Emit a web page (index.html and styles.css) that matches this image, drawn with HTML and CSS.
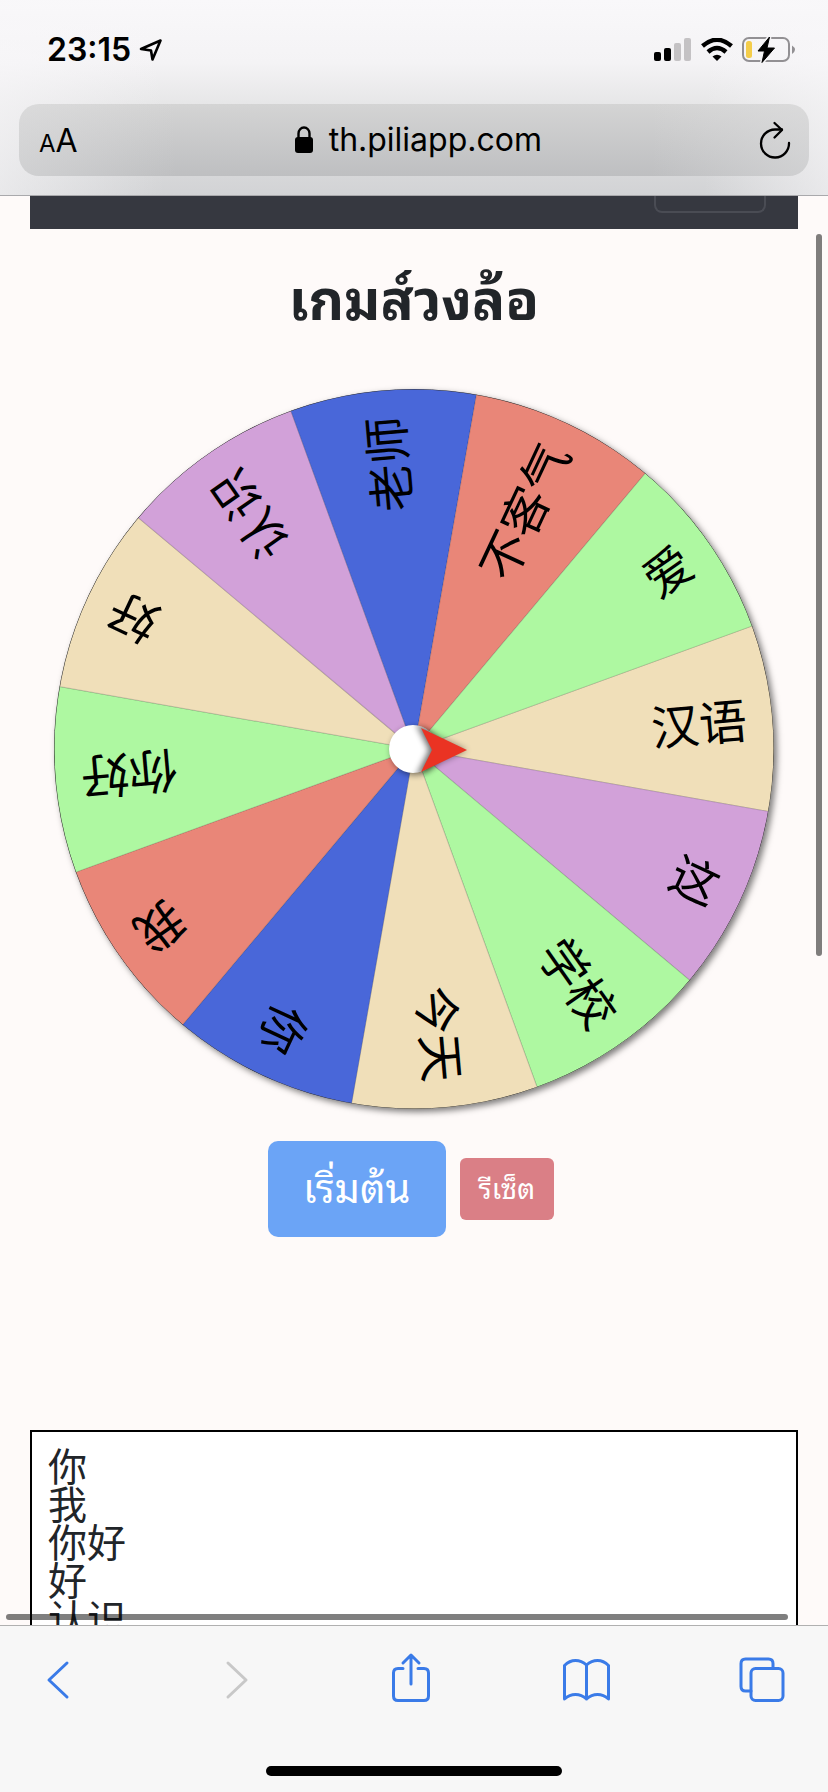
FILE: index.html
```html
<!DOCTYPE html>
<html lang="th">
<head>
<meta charset="utf-8">
<meta name="viewport" content="width=device-width, initial-scale=1">
<title>เกมส์วงล้อ</title>
<link rel="stylesheet" href="styles.css">
</head>
<body>
<header class="browser-top">
  <div class="status">
    <div class="status-left">
      <span class="time">23:15</span>
      <svg class="icon" width="24" height="24" viewBox="0 0 24 24" aria-hidden="true"><path d="M2 11 21.500 2.500 13.500 21.500 12 12.500z" fill="none" stroke="#000" stroke-width="2.600" stroke-linejoin="round"/></svg>
    </div>
    <div class="status-right">
      <svg class="icon" width="38" height="24" viewBox="0 0 38 24" aria-hidden="true"><rect x="0" y="14" width="7" height="9" rx="2"/><rect x="10" y="10" width="7" height="13" rx="2"/><g fill="#c4c2c4"><rect x="20" y="5" width="7" height="18" rx="2"/><rect x="30" y="0" width="7" height="23" rx="2"/></g></svg>
      <svg class="icon" width="32" height="24" viewBox="0 0 32 24" aria-hidden="true"><g fill="none" stroke="#000" stroke-width="4.400"><path d="M1.500 8Q16-4.500 30.500 8"/><path d="M7 14Q16 6 25 14"/></g><path d="M11.500 18.500Q16 15 20.500 18.500L16 23z"/></svg>
      <svg class="icon" width="54" height="28" viewBox="0 0 54 28" aria-hidden="true"><rect x="1" y="2" width="46" height="23" rx="6" fill="none" stroke="#929093" stroke-width="2"/><rect x="4" y="5" width="6" height="17" rx="2.500" fill="#f4cd4a"/><path d="M50 9.500q6 4 0 8.500z" fill="#929093"/><path d="M27.500 1 16 15h6.500L20 26.500 32.500 12H25z" stroke="#f5f4f6" stroke-width="4"/><path d="M27.500 1 16 15h6.500L20 26.500 32.500 12H25z" stroke="#000" stroke-linejoin="round"/></svg>
    </div>
  </div>
  <div class="address">
    <button class="bare text-size" aria-label="Text size"><span class="small-a">A</span><span class="big-a">A</span></button>
    <div class="site">
      <svg class="icon" width="18" height="28" viewBox="0 0 18 28" aria-hidden="true"><rect x="0" y="11" width="18" height="16" rx="3"/><path d="M3.500 13V7.500a5.500 6 0 0 1 11 0V13" fill="none" stroke="#000" stroke-width="2.400"/></svg>
      <span>th.piliapp.com</span>
    </div>
    <button class="bare" aria-label="Reload"><svg class="icon" width="32" height="38" viewBox="0 0 32 38" aria-hidden="true"><g fill="none" stroke="#000" stroke-width="2.300" stroke-linecap="round" stroke-linejoin="round"><path d="M30 22A14 14 0 1 1 16 8.500h7"/><path d="M15.500 2 23 9 15.500 16.500"/></g></svg></button>
  </div>
</header>

<main class="page">
  <nav class="navbar"><button class="menu-toggle" aria-label="Menu"></button></nav>
  <h1 class="title">เกมส์วงล้อ</h1>
  <svg class="wheel" viewBox="-360 -360 720 720" role="img" aria-label="เกมส์วงล้อ">
    <defs>
      <path id="slice" d="M0 0 347.700-93.200A360 360 0 0 1 347.700 93.200z"/>
      <clipPath id="hub"><circle cx="-1" cy="0" r="24"/></clipPath>
      <filter id="soft" x="-50%" y="-50%" width="200%" height="200%"><feGaussianBlur stdDeviation="3"/></filter>
    </defs>
    <g class="slices">
      <use href="#slice" class="wheat" transform="rotate(-5)"/>
      <use href="#slice" class="plum" transform="rotate(25)"/>
      <use href="#slice" class="green" transform="rotate(55)"/>
      <use href="#slice" class="wheat" transform="rotate(85)"/>
      <use href="#slice" class="blue" transform="rotate(115)"/>
      <use href="#slice" class="salmon" transform="rotate(145)"/>
      <use href="#slice" class="green" transform="rotate(175)"/>
      <use href="#slice" class="wheat" transform="rotate(205)"/>
      <use href="#slice" class="plum" transform="rotate(235)"/>
      <use href="#slice" class="blue" transform="rotate(265)"/>
      <use href="#slice" class="salmon" transform="rotate(295)"/>
      <use href="#slice" class="green" transform="rotate(325)"/>
    </g>
    <circle class="rim" r="360"/>
    <g class="labels">
      <text x="334" y="18" transform="rotate(-5)">汉语</text>
      <text x="334" y="18" transform="rotate(25)">这</text>
      <text x="334" y="18" transform="rotate(55)">学校</text>
      <text x="334" y="18" transform="rotate(85)">今天</text>
      <text x="334" y="18" transform="rotate(115)">你</text>
      <text x="334" y="18" transform="rotate(145)">我</text>
      <text x="334" y="18" transform="rotate(175)">你好</text>
      <text x="334" y="18" transform="rotate(205)">好</text>
      <text x="334" y="18" transform="rotate(235)">认识</text>
      <text x="334" y="18" transform="rotate(265)">老师</text>
      <text x="334" y="18" transform="rotate(295)">不客气</text>
      <text x="334" y="18" transform="rotate(325)">爱</text>
    </g>
    <circle cx="1" cy="2" r="24" opacity=".5" filter="url(#soft)"/>
    <path d="M8-21 53 1 8 23z" opacity=".4" filter="url(#soft)"/>
    <circle cx="-1" cy="0" r="24" fill="#fff"/>
    <path d="M7-21 53 1 7 23 18 1z" clip-path="url(#hub)" stroke="#000" stroke-width="5" opacity=".6" filter="url(#soft)"/>
    <path d="M7-21 53 1 7 23 18 1z" fill="#ea3323"/>
  </svg>
  <div class="actions">
    <button class="btn start">เริ่มต้น</button>
    <button class="btn reset">รีเซ็ต</button>
  </div>
  <textarea class="entries" aria-label="รายการ" spellcheck="false">你
我
你好
好
认识
老师
不客气
爱
汉语
这
学校
今天</textarea>
  <div class="scroll-y"></div>
  <div class="scroll-x"></div>
</main>

<footer class="browser-bottom">
  <nav class="tools">
    <button class="bare" aria-label="Back"><svg class="icon tool" viewBox="0 0 48 52"><path d="M33 11 15 28 33 45"/></svg></button>
    <button class="bare" aria-label="Forward" disabled><svg class="icon tool muted" viewBox="0 0 48 52"><path d="M18 11 36 28 18 45"/></svg></button>
    <button class="bare" aria-label="Share"><svg class="icon tool" viewBox="0 0 48 52"><path d="M17 16.500H12Q7.500 16.500 7.500 21V44Q7.500 48.500 12 48.500H38Q42.500 48.500 42.500 44V21Q42.500 16.500 38 16.500H32M25 32V3.500M17 11 25 3 33 11"/></svg></button>
    <button class="bare" aria-label="Bookmarks"><svg class="icon tool" viewBox="0 0 48 52"><path d="M24.500 13Q19.500 8.500 13.500 8.500T2.500 13.500V47Q7.500 42.500 13.500 42.500T24.500 47Q29.500 42.500 35.500 42.500T46.500 47V13.500Q41.500 8.500 35.500 8.500T24.500 13zV47"/></svg></button>
    <button class="bare" aria-label="Tabs"><svg class="icon tool" viewBox="0 0 48 52"><rect x="13" y="16.500" width="32" height="32" rx="4.500"/><path d="M13 39H7.500Q3 39 3 34.500V11.500Q3 7 7.500 7H30.500Q35 7 35 11.500V16.500"/></svg></button>
  </nav>
  <div class="home-bar"></div>
</footer>
</body>
</html>
```
FILE: styles.css
```css
* { box-sizing: border-box; }

body {
  margin: 0;
  height: 100vh;
  display: flex;
  flex-direction: column;
  overflow: hidden;
  background: #fefaf9;
  color: #212529;
  font-family: Inter, "Noto Sans Thai Looped", Loma, "Noto Sans Thai", "Noto Sans", "Noto Sans CJK SC", sans-serif;
}

.icon { display: block; flex: none; }

.bare {
  margin: 0;
  padding: 0;
  border: 0;
  background: none;
  color: inherit;
  font: inherit;
}

.browser-top {
  flex: none;
  padding: 0 19px 19px;
  border-bottom: 1px solid #a9a9ac;
  background:
    linear-gradient(90deg, rgba(248, 247, 249, .6), rgba(248, 247, 249, 0) 20%, rgba(248, 247, 249, 0) 85%, rgba(248, 247, 249, .6)),
    linear-gradient(#f9f8fa, #f4f3f5 32%, #e6e6e7 54%, #d2d3d5);
  color: #000;
}

.status {
  height: 104px;
  padding: 0 13px 4px 28px;
  display: flex;
  justify-content: space-between;
  align-items: center;
}

.status-left { display: flex; align-items: center; gap: 8px; }
.status-right { display: flex; align-items: center; gap: 9px; }
.time { font-size: 32px; font-weight: 600; line-height: 40px; }

.address {
  height: 72px;
  padding: 0 18px 0 20px;
  border-radius: 20px;
  display: flex;
  align-items: center;
  justify-content: space-between;
  background:
    linear-gradient(90deg, rgba(225, 225, 226, .5), rgba(225, 225, 226, 0) 20%, rgba(225, 225, 226, 0) 80%, rgba(225, 225, 226, .5)),
    linear-gradient(#d4d4d4, #bebfc1);
}

.text-size { display: flex; align-items: baseline; padding-top: 4px; line-height: 40px; }
.small-a { font-size: 24px; }
.big-a { font-size: 32px; }
.site { display: flex; align-items: center; gap: 16px; font-size: 32px; line-height: 40px; }

.page {
  flex: 1;
  min-height: 0;
  position: relative;
  overflow: hidden;
  padding: 0 30px;
  display: flex;
  flex-direction: column;
}

.navbar {
  flex: none;
  height: 33px;
  padding-right: 32px;
  display: flex;
  justify-content: flex-end;
  background: #363840;
}

.menu-toggle {
  width: 112px;
  height: 17px;
  border: 2px solid #4a4c54;
  border-top: 0;
  border-radius: 0 0 8px 8px;
  background: none;
}

.title {
  margin: 31px 0 49px;
  font-size: 55px;
  font-weight: 700;
  line-height: 80px;
  text-align: center;
}

.wheel {
  flex: none;
  display: block;
  margin: 0 24px 32px;
  border-radius: 50%;
  box-shadow: 3px 3px 6px rgba(0, 0, 0, .5);
}

.slices { stroke: #000; stroke-opacity: .15; stroke-width: 1; }
.rim { fill: none; stroke: #333; stroke-width: 1; }
.wheat { fill: #f0dfb9; }
.plum { fill: #d2a1d9; }
.green { fill: #aef8a1; }
.blue { fill: #4967d9; }
.salmon { fill: #e98678; }
.labels { font-family: "Noto Sans CJK SC", sans-serif; font-size: 48px; text-anchor: end; fill: #000; }

.actions {
  display: flex;
  justify-content: center;
  align-items: center;
  gap: 14px;
  margin: 0 6px 193px 0;
}

.btn { border: 0; color: #fff; font-family: inherit; }
.start { padding: 16px 35px; border-radius: 10px; background: #6ba4f6; font-size: 40px; line-height: 64px; }
.reset { padding: 8px 19px; border-radius: 6px; background: #da7f86; font-size: 28px; line-height: 46px; }

.entries {
  flex: none;
  display: block;
  width: 100%;
  height: 480px;
  padding: 13px 16px;
  border: 2px solid #000;
  border-radius: 0;
  resize: none;
  overflow: hidden;
  background: #fff;
  color: #212529;
  font-family: "Noto Sans CJK SC", sans-serif;
  font-size: 39px;
  line-height: 38px;
}

.scroll-y, .scroll-x { position: absolute; border-radius: 3px; background: rgba(0, 0, 0, .5); }
.scroll-y { top: 38px; right: 6px; width: 6px; height: 50.500%; }
.scroll-x { bottom: 5px; left: 6px; right: 40px; height: 6px; }

.browser-bottom {
  flex: none;
  border-top: 1px solid #b0b0b0;
  background: #f7f7f7;
  padding: 26px 0 16px;
}

.tools { display: flex; justify-content: space-between; padding: 0 42px 0 34px; }

.tool {
  width: 48px;
  height: 52px;
  fill: none;
  stroke: #3a7be8;
  stroke-width: 3;
  stroke-linecap: round;
  stroke-linejoin: round;
}

.muted { stroke: #c8c8c8; }

.home-bar {
  width: 296px;
  height: 10px;
  margin: 62px auto 0;
  border-radius: 5px;
  background: #000;
}
```
